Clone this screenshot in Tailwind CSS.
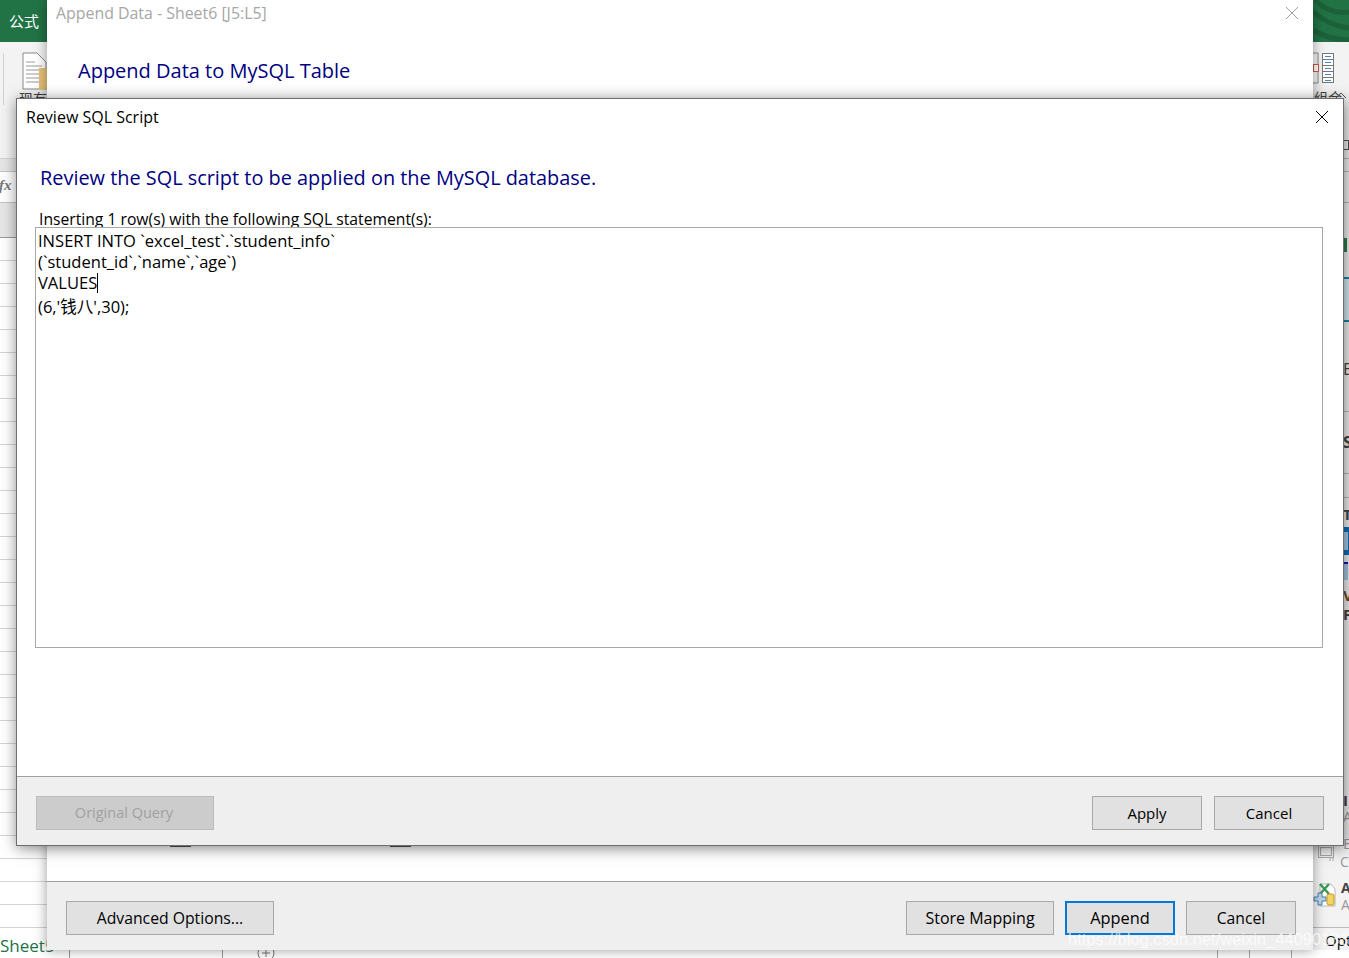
<!DOCTYPE html>
<html lang="en">
<head>
  <meta charset="UTF-8">
  <title>Review SQL Script</title>
  <script src="https://cdn.jsdelivr.net/npm/@tailwindcss/browser@4"></script>
</head>
<body class="relative h-[958px] overflow-hidden bg-white font-['Open_Sans','Noto_Sans_CJK_SC',sans-serif] text-black">

  <!-- Excel behind the windows -->
  <div class="absolute inset-0">
    <div class="h-[42px] bg-[#217346]">
      <div class="w-[47px] pt-[12px] pl-[9px] text-[15px] leading-[18px] text-white">公式</div>
    </div>
    <div class="h-[117px] border-b border-[#d4d4d4] bg-[#f3f3f3]"></div>
    <div class="h-[13px] border-b border-[#c4c4c4] bg-[#e6e6e6]"></div>
    <div class="h-[31px] border-b border-[#c4c4c4] bg-white"></div>
    <div class="h-[35px] border-b border-[#9a9a9a] bg-[#e6e6e6]"></div>
    <div class="grid">
      <div class="h-[23px] border-b border-[#d4d4d4]"></div>
      <div class="h-[23px] border-b border-[#d4d4d4]"></div>
      <div class="h-[23px] border-b border-[#d4d4d4]"></div>
      <div class="h-[23px] border-b border-[#d4d4d4]"></div>
      <div class="h-[23px] border-b border-[#d4d4d4]"></div>
      <div class="h-[23px] border-b border-[#d4d4d4]"></div>
      <div class="h-[23px] border-b border-[#d4d4d4]"></div>
      <div class="h-[23px] border-b border-[#d4d4d4]"></div>
      <div class="h-[23px] border-b border-[#d4d4d4]"></div>
      <div class="h-[23px] border-b border-[#d4d4d4]"></div>
      <div class="h-[23px] border-b border-[#d4d4d4]"></div>
      <div class="h-[23px] border-b border-[#d4d4d4]"></div>
      <div class="h-[23px] border-b border-[#d4d4d4]"></div>
      <div class="h-[23px] border-b border-[#d4d4d4]"></div>
      <div class="h-[23px] border-b border-[#d4d4d4]"></div>
      <div class="h-[23px] border-b border-[#d4d4d4]"></div>
      <div class="h-[23px] border-b border-[#d4d4d4]"></div>
      <div class="h-[23px] border-b border-[#d4d4d4]"></div>
      <div class="h-[23px] border-b border-[#d4d4d4]"></div>
      <div class="h-[23px] border-b border-[#d4d4d4]"></div>
      <div class="h-[23px] border-b border-[#d4d4d4]"></div>
      <div class="h-[23px] border-b border-[#d4d4d4]"></div>
      <div class="h-[23px] border-b border-[#d4d4d4]"></div>
      <div class="h-[23px] border-b border-[#d4d4d4]"></div>
      <div class="h-[23px] border-b border-[#d4d4d4]"></div>
      <div class="h-[23px] border-b border-[#d4d4d4]"></div>
      <div class="h-[23px] border-b border-[#d4d4d4]"></div>
      <div class="h-[23px] border-b border-[#d4d4d4]"></div>
      <div class="h-[23px] border-b border-[#d4d4d4]"></div>
      <div class="h-[23px] border-b border-[#d4d4d4]"></div>
    </div>
    <div class="absolute left-0 top-[935px] text-[17px] leading-[22px] text-[#217346]">Sheet5</div>
    <div class="absolute left-[69px] top-[940px] h-[18px] w-[154px] border-x border-[#9a9a9a]"></div>
    <svg class="absolute left-[257px] top-[944px]" width="18" height="14" viewBox="0 0 18 14" fill="none" stroke="#777"><circle cx="9" cy="9" r="8"/><path d="M9 5v8M5 9h8"/></svg>
    <div class="absolute left-[-1px] top-[175px] font-['Liberation_Serif',serif] text-[15px] leading-[20px] font-bold text-[#777] italic">fx</div>
    <div class="absolute left-[3px] top-[53px] h-[52px] w-px bg-[#d0d0d0]"></div>
    <svg class="absolute left-[20px] top-[52px]" width="28" height="38" viewBox="0 0 28 38" fill="none">
      <path d="M3 1h14l9 9v27H3z" fill="#fff" stroke="#8a8a8a"/>
      <path d="M6 10h9M6 14h16M6 18h16M6 22h16M6 26h16M6 30h16" stroke="#9a9a9a"/>
      <rect x="19" y="16" width="9" height="22" fill="#e6c27a"/>
    </svg>
    <div class="absolute left-[19px] top-[90px] text-[14px] leading-[18px] text-[#444]">现有</div>

    <!-- right edge of the ribbon and side panel -->
    <div class="absolute left-[1313px] top-0 h-[958px] w-[36px] overflow-hidden bg-[#f3f3f3] text-[#444]">
      <svg class="absolute left-0 top-0" width="36" height="42" viewBox="0 0 36 42" fill="#217346">
        <rect width="36" height="42"/>
        <path d="M0 12c10 8 20 14 36 16M2 0c8 8 20 14 34 12M0 30c10 6 22 10 36 10" stroke="#1c6139" stroke-width="5" fill="none"/>
      </svg>
      <svg class="absolute left-0 top-[52px]" width="24" height="32" viewBox="0 0 24 32" fill="none">
        <path d="M0 1h5M5 1v12M5 19v12M5 31H0" stroke="#888"/>
        <rect x="0.5" y="12.5" width="5" height="7" fill="#fff" stroke="#d0583c"/>
        <rect x="9.5" y="1.5" width="11" height="29" fill="#fff" stroke="#777"/>
        <path d="M9 7.5h12M9 13.500h12M9 19.500h12M9 25.500h12" stroke="#777"/>
        <path d="M12 4.500h6M12 10.500h6M12 16.500h6M12 22.500h6M12 28.500h6" stroke="#3f86cf"/>
      </svg>
      <div class="absolute left-[1px] top-[89px] text-[14px] leading-[18px]">组合</div>
      <svg class="absolute left-[22px] top-[92px]" width="12" height="7" viewBox="0 0 12 7" fill="none" stroke="#555"><path d="M1 6l5-5 5 5"/></svg>
      <div class="absolute top-[158px] h-px w-full bg-[#bbb]"></div>
      <div class="absolute top-[171px] h-px w-full bg-[#bbb]"></div>
      <div class="absolute top-[202px] h-px w-full bg-[#bbb]"></div>
      <div class="absolute left-[30px] top-[140px] h-[10px] w-[6px] border border-[#555]"></div>
      <div class="absolute left-[31px] top-[238px] h-[14px] w-[3px] bg-[#2f7d4f]"></div>
      <div class="absolute left-[31px] top-[277px] h-[45px] w-[5px] border-y-2 border-[#1b87a8] bg-[#d9edf5]"></div>
      <div class="absolute left-[30px] top-[358px] text-[16px] leading-[22px]">E</div>
      <div class="absolute top-[411px] h-px w-full bg-[#bbb]"></div>
      <div class="absolute left-[30px] top-[431px] text-[16px] leading-[22px] font-bold">S</div>
      <div class="absolute top-[473px] h-px w-full bg-[#bbb]"></div>
      <div class="absolute top-[497px] h-px w-full bg-[#bbb]"></div>
      <div class="absolute left-[30px] top-[503px] text-[15px] leading-[22px] font-bold">Ta</div>
      <div class="absolute left-[31px] top-[527px] h-[28px] w-[5px] bg-[#0b6fc0]"></div>
      <div class="absolute left-[31px] top-[532px] h-[18px] w-[4px] bg-[#a9cbe6]"></div>
      <div class="absolute left-[31px] top-[562px] h-[18px] w-[4px] border-t-2 border-[#1414c8] bg-[#a9cbe6]"></div>
      <div class="absolute left-[30px] top-[584px] text-[15px] leading-[22px] font-bold text-[#6b4a2a]">Vi</div>
      <div class="absolute left-[30px] top-[603px] text-[15px] leading-[22px] font-bold">P</div>
      <div class="absolute left-[30px] top-[789px] text-[15px] leading-[22px] font-bold">I</div>
      <div class="absolute left-[30px] top-[806px] text-[14px] leading-[22px] text-[#999]">A</div>
      <div class="absolute left-[30px] top-[832px] text-[15px] leading-[22px] text-[#999]">E</div>
      <svg class="absolute left-[4px] top-[845px]" width="18" height="18" viewBox="0 0 18 18" fill="none" stroke="#aaa"><rect x="1.500" y="0.500" width="15" height="12"/><rect x="3.500" y="2.500" width="11" height="8"/><path d="M13 13v3M16 13v3"/></svg>
      <div class="absolute left-[27px] top-[851px] text-[14px] leading-[22px] text-[#999]">C</div>
      <svg class="absolute left-0 top-[883px]" width="23" height="24" viewBox="0 0 23 24" fill="none">
        <path d="M7 1h11l4 5v17H7z" fill="#fff" stroke="#b8b8b8"/>
        <path d="M7 1l9 10M16 1L7 11" stroke="#3d9a55" stroke-width="2.500"/>
        <path d="M5 10h4v4h4v4H9v4H5v-4H1v-4h4z" fill="#bcd4ea" stroke="#4a7fb0"/>
        <rect x="14" y="11" width="7" height="11" rx="2" fill="#f4d35e" stroke="#c79a2a"/>
      </svg>
      <div class="absolute left-[28px] top-[877px] text-[14px] leading-[22px] font-bold text-[#444]">A</div>
      <div class="absolute left-[28px] top-[894px] text-[14px] leading-[22px] text-[#999]">A</div>
      <div class="absolute top-[927px] h-px w-full bg-[#bbb]"></div>
      <div class="absolute left-[12px] top-[929px] text-[15px] leading-[22px] text-black">Options</div>
      <div class="absolute top-[950px] h-[8px] w-full bg-white"></div>
    </div>
    <div class="absolute left-[1217px] top-[950px] h-[8px] w-[75px] border-x border-[#aaa]"></div>
    <div class="absolute left-[1249px] top-[950px] h-[8px] w-px bg-[#aaa]"></div>
  </div>

  <!-- Append Data window -->
  <div class="absolute left-[47px] top-0 flex h-[950px] w-[1266px] flex-col bg-white shadow-[0_0_12px_rgba(0,0,0,0.4)]">
    <div class="flex h-[25px] items-center justify-between pr-[14px] pl-[9px]">
      <span class="text-[15.900px] leading-[26px] text-[#a6a6a6]">Append Data - Sheet6 [J5:L5]</span>
      <svg width="14" height="14" viewBox="0 0 14 14" stroke="#a0a0a0" fill="none"><path d="M1 1l12 12M13 1L1 13"/></svg>
    </div>
    <h2 class="mt-[34px] ml-[31px] text-[20px] leading-[24px] text-[#000080]">Append Data to MySQL Table</h2>
    <div class="flex-1"></div>
    <div class="flex h-[69px] items-start justify-between border-t border-[#a0a0a0] bg-[#efefef] pt-[19px] pr-[17px] pl-[19px]">
      <button class="h-[34px] w-[208px] border border-[#a8a8a8] bg-[#e1e1e1] pt-px text-[15.750px]">Advanced Options...</button>
      <div class="flex gap-[11px]">
        <button class="h-[34px] w-[148px] border border-[#a8a8a8] bg-[#e1e1e1] text-[16px]">Store Mapping</button>
        <button class="h-[34px] w-[110px] border-2 border-[#0078d7] bg-[#e1e1e1] text-[16.400px]">Append</button>
        <button class="h-[34px] w-[110px] border border-[#a8a8a8] bg-[#e1e1e1] pt-px text-[15.700px]">Cancel</button>
      </div>
    </div>
  </div>

  <!-- bits of the window's table that show under the dialog -->
  <div class="absolute left-[170px] top-[845px] h-[2px] w-[21px] bg-[#555]"></div>
  <div class="absolute left-[390px] top-[845px] h-[2px] w-[21px] bg-[#555]"></div>

  <!-- Review SQL Script dialog -->
  <div class="absolute left-[16px] top-[98px] flex h-[748px] w-[1328px] flex-col border border-[#6e6e6e] bg-white shadow-[1px_2px_14px_rgba(0,0,0,0.5)]">
    <div class="flex h-[36px] items-center justify-between pr-[14px] pl-[9px]">
      <span class="text-[16px] leading-[20px]">Review SQL Script</span>
      <svg width="14" height="14" viewBox="0 0 14 14" stroke="#000" fill="none"><path d="M1 1l12 12M13 1L1 13"/></svg>
    </div>
    <h1 class="mt-[28px] ml-[23px] text-[19.900px] leading-[30px] text-[#000080]">Review the SQL script to be applied on the MySQL database.</h1>
    <div class="mt-[15px] ml-[22px] h-[19px] overflow-hidden text-[15.700px] leading-[22px]">Inserting 1 row(s) with the following SQL statement(s):</div>
    <div class="mr-[20px] ml-[18px] h-[421px] border border-[#a8a8a8] pt-[2px] pl-[2px] text-[16.550px] leading-[21px]">
      <div>INSERT INTO `excel_test`.`student_info`</div>
      <div>(`student_id`,`name`,`age`)</div>
      <div class="flex h-[21px]"><span>VALUES</span><span class="mt-[1px] h-[20px] w-px bg-black"></span></div>
      <div class="mt-[3px]">(6,'钱八',30);</div>
    </div>
    <div class="flex-1"></div>
    <div class="flex h-[69px] items-start justify-between border-t border-[#a0a0a0] bg-[#efefef] pt-[19px] pr-[19px] pl-[19px]">
      <button class="h-[34px] w-[178px] border border-[#bcbcbc] bg-[#cccccc] pr-[2px] text-[14.500px] text-[#a0a0a0]">Original Query</button>
      <div class="flex gap-[12px]">
        <button class="h-[34px] w-[110px] border border-[#a8a8a8] bg-[#e1e1e1] text-[15px]">Apply</button>
        <button class="h-[34px] w-[110px] border border-[#a8a8a8] bg-[#e1e1e1] text-[15px]">Cancel</button>
      </div>
    </div>
  </div>

  <div class="absolute left-[1068px] top-[928px] font-['Liberation_Sans',sans-serif] text-[16.500px] leading-[22px] text-white/70">https://blog.csdn.net/weixin_44090133</div>
</body>
</html>
